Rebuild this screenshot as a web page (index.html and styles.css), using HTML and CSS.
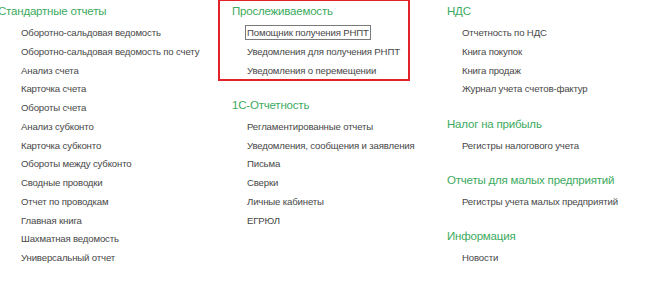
FILE: index.html
```html
<!DOCTYPE html>
<html lang="ru">
<head>
<meta charset="utf-8">
<link rel="stylesheet" href="styles.css">
</head>
<body>
<div class="page">
  <div class="col col1">
    <div class="section">
      <div class="heading">Стандартные отчеты</div>
      <ul class="items">
        <li>Оборотно-сальдовая ведомость</li>
        <li>Оборотно-сальдовая ведомость по счету</li>
        <li>Анализ счета</li>
        <li>Карточка счета</li>
        <li>Обороты счета</li>
        <li>Анализ субконто</li>
        <li>Карточка субконто</li>
        <li>Обороты между субконто</li>
        <li>Сводные проводки</li>
        <li>Отчет по проводкам</li>
        <li>Главная книга</li>
        <li>Шахматная ведомость</li>
        <li>Универсальный отчет</li>
      </ul>
    </div>
  </div>
  <div class="col col2">
    <div class="section marked">
      <div class="heading">Прослеживаемость</div>
      <ul class="items">
        <li><span class="focused">Помощник получения РНПТ</span></li>
        <li>Уведомления для получения РНПТ</li>
        <li>Уведомления о перемещении</li>
      </ul>
    </div>
    <div class="section">
      <div class="heading">1С-Отчетность</div>
      <ul class="items">
        <li>Регламентированные отчеты</li>
        <li>Уведомления, сообщения и заявления</li>
        <li>Письма</li>
        <li>Сверки</li>
        <li>Личные кабинеты</li>
        <li>ЕГРЮЛ</li>
      </ul>
    </div>
  </div>
  <div class="col col3">
    <div class="section">
      <div class="heading">НДС</div>
      <ul class="items">
        <li>Отчетность по НДС</li>
        <li>Книга покупок</li>
        <li>Книга продаж</li>
        <li>Журнал учета счетов-фактур</li>
      </ul>
    </div>
    <div class="section">
      <div class="heading">Налог на прибыль</div>
      <ul class="items">
        <li>Регистры налогового учета</li>
      </ul>
    </div>
    <div class="section">
      <div class="heading">Отчеты для малых предприятий</div>
      <ul class="items">
        <li>Регистры учета малых предприятий</li>
      </ul>
    </div>
    <div class="section">
      <div class="heading">Информация</div>
      <ul class="items">
        <li>Новости</li>
      </ul>
    </div>
  </div>
</div>
</body>
</html>
```
FILE: styles.css
```css
html, body {
  margin: 0;
  padding: 0;
  background: #ffffff;
  overflow: hidden;
}
body {
  font-family: "Liberation Sans", Arial, sans-serif;
  width: 663px;
  height: 303px;
}
.page {
  display: grid;
  grid-template-columns: 234px 215px 1fr;
  margin-left: -2px;
  padding-top: 3px;
}
.section + .section {
  margin-top: 16.5px;
}
.heading {
  font-size: 11.5px;
  letter-spacing: -0.2px;
  line-height: 16px;
  color: #3caa5e;
  margin-bottom: 5px;
  white-space: nowrap;
}
.items {
  list-style: none;
  margin: 0;
  padding: 0 0 0 15px;
}
.col1 .items {
  padding-left: 23px;
}
.items li {
  font-size: 9.6px;
  letter-spacing: -0.15px;
  line-height: 18.75px;
  color: #474747;
  white-space: nowrap;
}
.focused {
  outline: 1px solid #7a7a7a;
  outline-offset: 1px;
}
.marked {
  position: relative;
}
.marked::after {
  content: "";
  position: absolute;
  left: -14px;
  top: -4px;
  width: 188px;
  height: 78px;
  border: 2px solid #e2222a;
  pointer-events: none;
}
```
